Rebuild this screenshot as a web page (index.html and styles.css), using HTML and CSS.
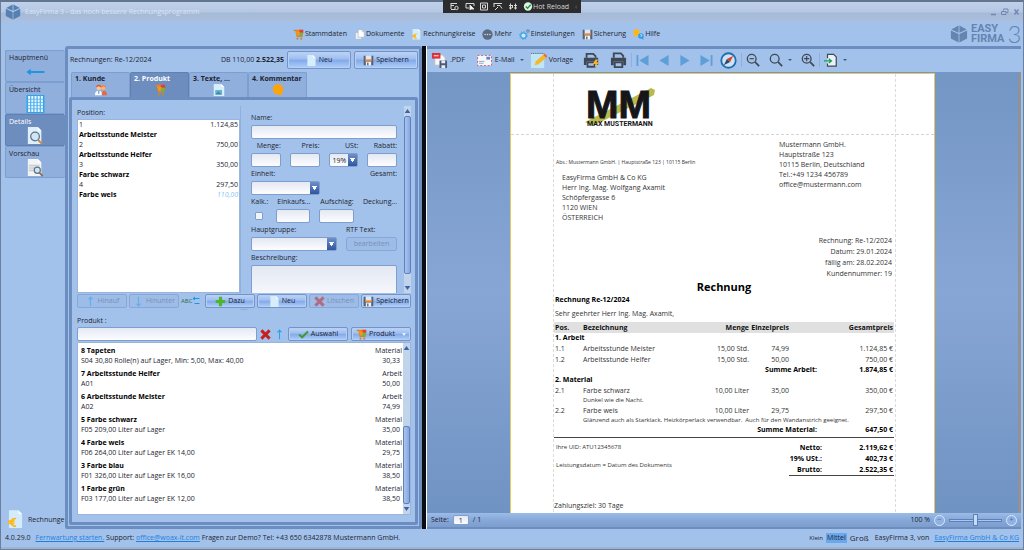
FILE: index.html
```html
<!DOCTYPE html>
<html lang="de">
<head>
  <meta charset="UTF-8">
  <meta name="viewport" content="width=device-width, initial-scale=1.0">
  <title>EasyFirma 3 - das noch bessere Rechnungsprogramm</title>
  <link rel="stylesheet" href="styles.css">
</head>
<body>
  <!-- Symbole -->
  <svg class="symbols" width="0" height="0" aria-hidden="true">
    <symbol id="i-cube" viewBox="0 0 20 20">
      <path d="M9.5 0.5v8L1.5 5zM10.5 0.5v8l8-3.5zM1 6l8.5 4v9.5L1 15zM19 6l-8.5 4v9.5L19 15z"/>
    </symbol>
    <symbol id="i-cart" viewBox="0 0 16 16">
      <path d="M1 2h3l2 9h8" fill="none" stroke="#c98a2b" stroke-width="1.5"/>
      <path d="M4 1h5v9H6z" fill="#f58220"/><path d="M9 1h6v5H9z" fill="#e8402a"/><path d="M9 5h6l-1 5H9z" fill="#7fae3a"/>
      <path d="M4 4l6 0-1 5-3 0z" fill="#f7941e"/>
      <circle cx="6.500" cy="14" r="1.500" fill="#c48a3a"/><circle cx="12" cy="14" r="1.500" fill="#c48a3a"/>
    </symbol>
    <symbol id="i-docs" viewBox="0 0 16 16">
      <path d="M2 5h7l2 2v8H2z" fill="#eef3f8" stroke="#a9b4c2"/>
      <path d="M6 1h6l3 3v8H6z" fill="#fff" stroke="#a9b4c2"/><path d="M12 1v3h3" fill="none" stroke="#a9b4c2"/>
    </symbol>
    <symbol id="i-euro" viewBox="0 0 16 20">
      <path d="M1 0h10l4 4v15H1z" fill="#d4ebfb"/><path d="M11 0v4h4z" fill="#f4fbff"/>
      <path d="M8.500 9.200a4 4 0 1 0 0 7.600M0 11.800h7M0 14.200h7" fill="none" stroke="#fdb813" stroke-width="1.900"/>
    </symbol>
    <symbol id="i-more" viewBox="0 0 16 16">
      <circle cx="8" cy="8" r="7.500" fill="#5b6b80"/><g fill="#c9d8ec"><circle cx="4.500" cy="8" r="1.200"/><circle cx="8" cy="8" r="1.200"/><circle cx="11.500" cy="8" r="1.200"/></g>
    </symbol>
    <symbol id="i-gears" viewBox="0 0 16 16">
      <circle cx="6.500" cy="9.500" r="4" fill="#cfe6fa" stroke="#3ba0e6" stroke-width="1.800"/>
      <circle cx="6.500" cy="9.500" r="5.700" fill="none" stroke="#3ba0e6" stroke-width="1.400" stroke-dasharray="2 2.400"/>
      <circle cx="13" cy="3" r="1.800" fill="none" stroke="#6b87ad" stroke-width="1.600"/>
    </symbol>
    <symbol id="i-save" viewBox="0 0 16 16">
      <path d="M1 1h3v6h8V1h3v14h-3V9H4v6H1z" fill="#5a6470"/>
      <path d="M4 1h8v6H4z" fill="#dce8f5"/><path d="M3 6.500h10v2.500H3z" fill="#f58220"/><path d="M4.500 10h7v5h-7z" fill="#f2f5f9"/><path d="M6 11h2v4H6z" fill="#5a6470"/>
    </symbol>
    <symbol id="i-help" viewBox="0 0 16 16">
      <circle cx="5" cy="5" r="4.500" fill="#fdb813"/><path d="M2 8l-1 4 4-3z" fill="#fdb813"/>
      <circle cx="11.500" cy="10" r="4" fill="#2e9be6"/><path d="M12 13l3 3v-4z" fill="#2e9be6"/>
      <path d="M10.500 9a1.200 1.200 0 1 1 1.200 1.500v1" fill="none" stroke="#fff"/>
    </symbol>
    <symbol id="i-page" viewBox="0 0 12 16">
      <path d="M0 0h8l4 4v12H0z" fill="#d6eefc"/><path d="M8 0v4h4z" fill="#f6fcff"/>
    </symbol>
    <symbol id="i-left" viewBox="0 0 20 8">
      <path d="M5 0.500v7L0.500 4z" fill="#1c94e0"/><path d="M19.500 4H3" fill="none" stroke="#1c94e0" stroke-width="2"/>
    </symbol>
    <symbol id="i-up" viewBox="0 0 8 16">
      <path d="M4 15V2M1 5l3-3.500L7 5" fill="none" stroke="#2aa3ee" stroke-width="1.600"/>
    </symbol>
    <symbol id="i-grid" viewBox="0 0 17 17">
      <path d="M0 0h17v17H0z" fill="#2fa4ea"/>
      <path d="M2.500 1v15M5.500 1v15M8.500 1v15M11.500 1v15M14.500 1v15" stroke="#eaf7ff" stroke-width="2" fill="none"/>
      <path d="M1 4h15M1 7h15M1 10h15M1 13h15" stroke="#55b6ee" stroke-width="0.800" fill="none"/>
    </symbol>
    <symbol id="i-lens" viewBox="0 0 17 20">
      <circle cx="8" cy="10.500" r="4.800" fill="#cfe6f7" stroke="#5f7385" stroke-width="1.400"/><path d="M11.500 14.500l4.500 4.500" stroke="#c98a4b" stroke-width="2.200"/>
    </symbol>
    <symbol id="i-details" viewBox="0 0 17 20">
      <path d="M0 0h11l4 4v15H0z" fill="#dff0fb"/><path d="M11 0v4h4z" fill="#fff"/><use href="#i-lens" width="17" height="20"/>
    </symbol>
    <symbol id="i-preview" viewBox="0 0 17 20">
      <path d="M0 0h11l4 4v15H0z" fill="#f1f3f5"/><path d="M11 0v4h4z" fill="#fff"/>
      <path d="M1 7h12M1 9h12M1 11h12M1 13h12" stroke="#b4bbc3" stroke-width="0.900"/>
      <circle cx="10.500" cy="12.500" r="3.400" fill="#cfe6f7" stroke="#5f7385" stroke-width="1.300"/><path d="M13 15.500l3.500 3.500" stroke="#8d6b58" stroke-width="2"/>
    </symbol>
    <symbol id="i-people" viewBox="0 0 16 16">
      <circle cx="5" cy="5" r="3.200" fill="#f6c79a"/><path d="M1.500 4.500a3.500 3.500 0 0 1 7 0L5 3z" fill="#e2552b"/><path d="M0 15c0-5 2-6 5-6s4 1 4.500 6z" fill="#f6f8fb"/><path d="M4.500 9h1.200v4H4.500z" fill="#3276c8"/>
      <circle cx="11" cy="5" r="3.200" fill="#f6b37a"/><path d="M7.500 5a3.500 3.500 0 1 1 7 0l-3-2z" fill="#ef7d1a"/><path d="M9 15c0-4 1-6 3-6s4 2 4 6z" fill="#e66a3c"/>
    </symbol>
    <symbol id="i-text" viewBox="0 0 14 16">
      <path d="M0 0h10l4 4v12H0z" fill="#d6eefc"/><path d="M2 8h9v6H2z" fill="#5fb6c8"/><path d="M2 14l4-4 5 4z" fill="#4a7fae"/><path d="M10 0v4h4z" fill="#fff"/>
    </symbol>
    <symbol id="i-comment" viewBox="0 0 16 16">
      <circle cx="8" cy="7" r="7" fill="#fda40b"/><path d="M6 12h8l-3 4-3-3z" fill="#fda40b"/>
    </symbol>
    <symbol id="i-x" viewBox="0 0 16 16">
      <path d="M2 2l12 12M14 2L2 14" stroke="#c81e1e" stroke-width="4.200"/>
    </symbol>
    <symbol id="i-plus" viewBox="0 0 16 16"><path d="M8 1v14M1 8h14" stroke="#4fb52a" stroke-width="4.600"/></symbol>
    <symbol id="i-check" viewBox="0 0 16 12"><path d="M1.500 6L6 10 14.500 1.500" fill="none" stroke="#3f9c35" stroke-width="3"/></symbol>
    <symbol id="i-first" viewBox="0 0 14 14"><path d="M0 1h2v12H0zM13 1v12L3 7z"/></symbol>
    <symbol id="i-prev" viewBox="0 0 14 14"><path d="M12 1v12L2 7z"/></symbol>
    <symbol id="i-printer" viewBox="0 0 18 18">
      <path d="M4 6V1.500h7.500L14 4v2" fill="none" stroke="#3f4854" stroke-width="2"/>
      <path d="M1 6h16v8h-3v-4H4v4H1z" fill="#3f4854"/><path d="M5 11h8v5H5z" fill="none" stroke="#3f4854" stroke-width="2"/>
    </symbol>
    <symbol id="i-zoom" viewBox="0 0 16 16">
      <circle cx="6.500" cy="6.500" r="5" fill="none" stroke="#3f4854" stroke-width="1.500"/><path d="M10.500 10.500l4.500 4.500" stroke="#3f4854" stroke-width="2"/>
    </symbol>
  </svg>

  <div class="window">
    <header class="titlebar">
      <svg class="icon cube"><use href="#i-cube"/></svg>
      <span class="caption">EasyFirma 3 - das noch bessere Rechnungsprogramm</span>
      <svg class="win-buttons" viewBox="0 0 30 8" fill="none" stroke="#7583b3">
        <path d="M1 6.500h5" stroke-width="1.500"/><path d="M13.500 2.500v-1.500h4.500v3.500h-1.500M11.500 3.500h4.500v3h-4.500z"/><path d="M24.500 1.500l4 5M28.500 1.500l-4 5" stroke-width="1.400"/>
      </svg>
      <div class="debugbar">
        <svg viewBox="0 0 68 9" fill="none" stroke="#d8d8d8">
          <path d="M1 1.500h6M1 3.500h3M1 7.500h4M1 1v6"/><circle cx="6.500" cy="6" r="1.700"/>
          <path d="M19 6h-3V1.500h8V4"/><path d="M20 3l4 4h-3l-1 1z" fill="#fff"/>
          <path d="M30.500 1h7v7h-7zM32.500 3h3v3h-3z"/>
          <path d="M44 1.500h8M44 1v4M47 3.500h3l2 3M45 8l3-3"/>
          <path d="M60.500 1.500v6M62.500 3v3M65.500 1.500v6M59 3.500h3M64 3.500h3M59 6h3M64 6h3"/>
        </svg>
        <svg class="ok" viewBox="0 0 10 10"><circle cx="5" cy="5" r="4.600" fill="#dff5df"/><path d="M2.500 5l2 2 3.500-4" fill="none" stroke="#239a3b" stroke-width="1.600"/></svg>
        <span>Hot Reload</span>
        <span class="collapse">‹</span>
      </div>
    </header>

    <div class="ribbon">
      <nav class="menu">
        <a href="#"><svg class="icon"><use href="#i-cart"/></svg>Stammdaten</a>
        <a href="#"><svg class="icon"><use href="#i-docs"/></svg>Dokumente</a>
        <a href="#"><svg class="icon"><use href="#i-euro"/></svg>Rechnungkreise</a>
        <a href="#"><svg class="icon"><use href="#i-more"/></svg>Mehr</a>
        <a href="#"><svg class="icon"><use href="#i-gears"/></svg>Einstellungen</a>
        <a href="#"><svg class="icon"><use href="#i-save"/></svg>Sicherung</a>
        <a href="#"><svg class="icon"><use href="#i-help"/></svg>Hilfe</a>
      </nav>
      <div class="brand">
        <svg class="cube"><use href="#i-cube"/></svg>
        <span class="brand-name">EASY<br>FIRMA</span>
        <span class="brand-no">3</span>
      </div>
    </div>

    <main class="main">
      <aside class="sidebar">
        <a class="side-tab" href="#">Hauptmenü<svg class="arrow"><use href="#i-left"/></svg></a>
        <a class="side-tab" href="#">Übersicht<svg><use href="#i-grid"/></svg></a>
        <a class="side-tab active" href="#">Details<svg><use href="#i-details"/></svg></a>
        <a class="side-tab" href="#">Vorschau<svg><use href="#i-preview"/></svg></a>
        <div class="side-foot"><svg><use href="#i-euro"/></svg><span>Rechnunge</span></div>
      </aside>

      <section class="panel">
        <div class="panel-head">
          <span>Rechnungen: Re-12/2024</span>
          <span class="sum">DB 110,00 <b>2.522,35</b></span>
          <button class="btn big" type="button"><svg class="icon"><use href="#i-page"/></svg>Neu</button>
          <button class="btn big" type="button"><svg class="icon"><use href="#i-save"/></svg>Speichern</button>
        </div>
        <div class="tabs">
          <a class="tab" href="#">1. Kunde<svg><use href="#i-people"/></svg></a>
          <a class="tab active" href="#">2. Produkt<svg><use href="#i-cart"/></svg></a>
          <a class="tab" href="#">3. Texte, ...<svg><use href="#i-text"/></svg></a>
          <a class="tab" href="#">4. Kommentar<svg><use href="#i-comment"/></svg></a>
        </div>

        <div class="tab-body">
          <div class="editor">
            <div class="positions">
              <div class="label">Position:</div>
              <ul class="pos-list">
                <li><span>1</span><span>1.124,85</span></li>
                <li><b>Arbeitsstunde Meister</b></li>
                <li><span>2</span><span>750,00</span></li>
                <li><b>Arbeitsstunde Helfer</b></li>
                <li><span>3</span><span>350,00</span></li>
                <li><b>Farbe schwarz</b></li>
                <li><span>4</span><span>297,50</span></li>
                <li><b>Farbe weis</b><i>110,00</i></li>
              </ul>
            </div>

            <form class="fields">
              <div class="row">
                <label class="field">Name:<input type="text"></label>
              </div>
              <div class="row four">
                <label class="field num">Menge:<input type="text"></label>
                <label class="field num">Preis:<input type="text"></label>
                <label class="field num">USt:<select><option>19%</option></select></label>
                <label class="field num">Rabatt:<input type="text"></label>
              </div>
              <div class="row four">
                <label class="field wide">Einheit:<select><option></option></select></label>
                <span class="field num last">Gesamt:</span>
              </div>
              <div class="row calc">
                <label class="field">Kalk.:<input type="checkbox"></label>
                <label class="field num">Einkaufs...<input type="text"></label>
                <label class="field num">Aufschlag:<input type="text"></label>
                <span class="field num">Deckung...</span>
              </div>
              <div class="row group">
                <label class="field">Hauptgruppe:<select><option></option></select></label>
                <div class="field">RTF Text:<button class="btn" type="button" disabled>bearbeiten</button></div>
              </div>
              <div class="row">
                <label class="field">Beschreibung:<textarea></textarea></label>
              </div>
            </form>

            <div class="scrollbar"><span class="up"></span><span class="thumb form-thumb"></span><span class="down"></span></div>
          </div>

          <div class="buttons">
            <button class="btn" type="button" disabled><svg class="icon"><use href="#i-up"/></svg>Hinauf</button>
            <button class="btn" type="button" disabled><svg class="icon flip"><use href="#i-up"/></svg>Hinunter</button>
            <span class="tools">
              <span class="abc">ABC</span>
              <svg viewBox="0 0 8 10" fill="none" stroke="#1c94e0"><path d="M7.500 2.500h-6M3 1L1 2.500 3 4M2.500 7.500h5" /></svg>
            </span>
            <button class="btn" type="button"><svg class="icon"><use href="#i-plus"/></svg>Dazu</button>
            <button class="btn" type="button"><svg class="icon"><use href="#i-page"/></svg>Neu</button>
            <button class="btn" type="button" disabled><svg class="icon"><use href="#i-x"/></svg>Löschen</button>
            <button class="btn" type="button"><svg class="icon"><use href="#i-save"/></svg>Speichern</button>
          </div>
          <div class="grip">····</div>

          <label class="label" for="produkt">Produkt :</label>
          <div class="search">
            <input type="text" id="produkt">
            <svg class="icon"><use href="#i-x"/></svg>
            <svg class="icon"><use href="#i-up"/></svg>
            <button class="btn" type="button"><svg class="icon"><use href="#i-check"/></svg>Auswahl</button>
            <button class="btn drop" type="button"><svg class="icon"><use href="#i-cart"/></svg>Produkt</button>
          </div>
          <div class="products">
            <ul>
              <li><b>8 Tapeten</b><span>Material</span><span>S04 30,80 Rolle(n) auf Lager, Min: 5,00, Max: 40,00</span><span class="price">30,33</span></li>
              <li><b>7 Arbeitsstunde Helfer</b><span>Arbeit</span><span>A01</span><span class="price">50,00</span></li>
              <li><b>6 Arbeitsstunde Meister</b><span>Arbeit</span><span>A02</span><span class="price">74,99</span></li>
              <li><b>5 Farbe schwarz</b><span>Material</span><span>F05 209,00 Liter auf Lager</span><span class="price">35,00</span></li>
              <li><b>4 Farbe weis</b><span>Material</span><span>F06 264,00 Liter auf Lager EK 14,00</span><span class="price">29,75</span></li>
              <li><b>3 Farbe blau</b><span>Material</span><span>F01 326,00 Liter auf Lager EK 16,00</span><span class="price">38,50</span></li>
              <li><b>1 Farbe grün</b><span>Material</span><span>F03 177,00 Liter auf Lager EK 12,00</span><span class="price">38,50</span></li>
            </ul>
            <div class="scrollbar end"><span class="up"></span><span class="thumb"></span><span class="down"></span></div>
          </div>
        </div>
      </section>

      <div class="splitter"></div>

      <section class="viewer">
        <div class="toolbar">
          <button type="button"><svg viewBox="0 0 18 18">
            <path d="M4 3h8l3 3v8H4z" fill="#f7f7f7" stroke="#b9bcc4"/><path d="M1 1h9v6H1z" fill="#d8323c"/><path d="M3 4h5" stroke="#fff"/>
            <path d="M9 9h8v8H9z" fill="#4a5a78"/><path d="M11 9h4v3h-4zM11 14h4v3h-4z" fill="#e8edf5"/></svg>.PDF</button>
          <button type="button" class="mail"><svg viewBox="0 0 18 14">
            <path d="M1.500 1.500h15v11h-15z" fill="#f4f7fb" stroke="#c6586a" stroke-dasharray="2 2"/><path d="M11 3h4v3h-4z" fill="#5f84c4"/><path d="M3 8h6M3 10h5" stroke="#9aa6b8"/></svg>E-Mail<i class="caret"></i></button>
          <button type="button" class="template"><svg viewBox="0 0 18 18">
            <path d="M1 2h14v15H1z" fill="#bfe6f5"/><path d="M1 1.500h14" stroke="#4a5a6b" stroke-dasharray="1 1"/><path d="M5 14l1-4 8-7 3 3-8 7z" fill="#fbb52a"/><path d="M14 3l1.500-1.500 3 3L17 6z" fill="#e86a3a"/></svg>Vorlage</button>
          <button type="button" class="printer" aria-label="Schnelldruck"><svg viewBox="0 0 19 18"><use href="#i-printer" width="18" height="18"/><path d="M14 8l-3 5h3l-1 4 5-6h-3l2-3z" fill="#fbb52a"/></svg></button>
          <button type="button" class="printer" aria-label="Drucken"><svg><use href="#i-printer"/></svg></button>
          <i class="sep"></i>
          <button type="button" class="nav-btn" aria-label="Erste Seite"><svg><use href="#i-first"/></svg></button>
          <button type="button" class="nav-btn" aria-label="Vorige Seite"><svg><use href="#i-prev"/></svg></button>
          <button type="button" class="nav-btn flip-x" aria-label="Nächste Seite"><svg><use href="#i-prev"/></svg></button>
          <button type="button" class="nav-btn flip-x" aria-label="Letzte Seite"><svg><use href="#i-first"/></svg></button>
          <button type="button" class="compass" aria-label="Navigation"><svg viewBox="0 0 16 16"><circle cx="8" cy="8" r="6.800" fill="#cfe3f8" stroke="#1f6fae" stroke-width="1.700"/><path d="M12.500 3.500L9.500 9.500 6.500 6.500z" fill="#e0401f"/><path d="M3.500 12.500l3-6 3 3z" fill="#2a4a6b"/></svg></button>
          <i class="sep"></i>
          <button type="button" class="zoom-btn" aria-label="Verkleinern"><svg viewBox="0 0 16 16"><use href="#i-zoom" width="16" height="16"/><path d="M4 6.500h5" stroke="#3f4854" stroke-width="1.300"/></svg></button>
          <button type="button" class="zoom-btn" aria-label="Zoom"><svg><use href="#i-zoom"/></svg><i class="caret"></i></button>
          <button type="button" class="zoom-btn" aria-label="Vergrößern"><svg viewBox="0 0 16 16"><use href="#i-zoom" width="16" height="16"/><path d="M3.500 6.500h6M6.500 3.500v6" stroke="#3f4854" stroke-width="1.300"/></svg></button>
          <i class="sep"></i>
          <button type="button" class="zoom-btn" aria-label="Exportieren"><svg viewBox="0 0 16 16"><path d="M4 6V1.500h7l3 3V15H4v-3" fill="#eaf2fb" stroke="#3f4854" stroke-width="1.400"/><path d="M0 9h8M5.500 6.500L8.500 9l-3 2.500" fill="none" stroke="#1f9a4d" stroke-width="1.500"/></svg><i class="caret"></i></button>
        </div>

        <div class="canvas">
          <article class="paper">
            <header class="letterhead">
              <svg class="logo" viewBox="0 0 72 44" role="img" aria-label="MM Max Mustermann">
                <path d="M0 38L66 4l4 2-1 5L8 42z" fill="#b9b94f"/>
                <text x="1" y="34" class="logo-mm">MM</text>
                <text x="2" y="42" class="logo-name">MAX MUSTERMANN</text>
              </svg>
            </header>
            <div class="letter">
              <div class="addresses">
                <div class="recipient">
                  <p class="sender">Abs.: Mustermann GmbH. | Hauptstraße 123 | 10115 Berlin</p>
                  <address>EasyFirma GmbH &amp; Co KG<br>Herr Ing. Mag. Wolfgang Axamit<br>Schöpfergasse 6<br>1120 WIEN<br>ÖSTERREICH</address>
                </div>
                <address class="company">Mustermann GmbH.<br>Hauptstraße 123<br>10115 Berlin, Deutschland<br>Tel.:+49 1234 456789<br>office@mustermann.com</address>
              </div>
              <p class="meta">Rechnung: Re-12/2024<br>Datum: 29.01.2024<br>fällig am: 28.02.2024<br>Kundennummer: 19</p>
              <h1>Rechnung</h1>
              <h2>Rechnung Re-12/2024</h2>
              <p class="salutation">Sehr geehrter Herr Ing. Mag. Axamit,</p>

              <table class="items">
                <colgroup><col class="c-pos"><col><col class="c-qty"><col class="c-unit"><col class="c-gap"><col class="c-total"></colgroup>
                <thead>
                  <tr><th>Pos.</th><th>Bezeichnung</th><th class="r">Menge</th><th class="r">Einzelpreis</th><th></th><th class="r">Gesamtpreis</th></tr>
                </thead>
                <tbody>
                  <tr class="bold"><td colspan="6">1. Arbeit</td></tr>
                  <tr><td>1.1</td><td>Arbeitsstunde Meister</td><td class="r">15,00 Std.</td><td class="r">74,99</td><td></td><td class="r">1.124,85 €</td></tr>
                  <tr><td>1.2</td><td>Arbeitsstunde Helfer</td><td class="r">15,00 Std.</td><td class="r">50,00</td><td></td><td class="r">750,00 €</td></tr>
                  <tr class="bold"><td colspan="5" class="r">Summe Arbeit:</td><td class="r">1.874,85 €</td></tr>
                  <tr class="bold"><td colspan="6">2. Material</td></tr>
                  <tr><td>2.1</td><td>Farbe schwarz</td><td class="r">10,00 Liter</td><td class="r">35,00</td><td></td><td class="r">350,00 €</td></tr>
                  <tr class="note"><td></td><td colspan="5">Dunkel wie die Nacht.</td></tr>
                  <tr><td>2.2</td><td>Farbe weis</td><td class="r">10,00 Liter</td><td class="r">29,75</td><td></td><td class="r">297,50 €</td></tr>
                  <tr class="note"><td></td><td colspan="5">Glänzend auch als Starklack, Heizkörperlack verwendbar.&nbsp; Auch für den Wandanstrich geeignet.</td></tr>
                  <tr class="bold"><td colspan="5" class="r">Summe Material:</td><td class="r">647,50 €</td></tr>
                </tbody>
              </table>

              <div class="summary">
                <div class="hints"><p>Ihre UID: ATU12345678</p><p>Leistungsdatum = Datum des Dokuments</p></div>
                <table class="totals">
                  <tr><th>Netto:</th><td>2.119,62 €</td></tr>
                  <tr><th>19% USt.:</th><td>402,73 €</td></tr>
                  <tr><th>Brutto:</th><td>2.522,35 €</td></tr>
                </table>
              </div>
              <p class="terms">Zahlungsziel: 30 Tage</p>
            </div>
          </article>
        </div>

        <div class="pager">
          <label for="seite">Seite:</label>
          <input type="text" id="seite" value="1">
          <span>/ 1</span>
          <span class="percent">100 %</span>
          <button class="round" type="button" aria-label="Kleiner">−</button>
          <input type="range" aria-label="Zoomstufe" min="0" max="100" value="50">
          <button class="round" type="button" aria-label="Größer">+</button>
        </div>
      </section>
    </main>

    <footer class="statusbar">
      <span class="version">4.0.29.0</span>
      <span><a href="#">Fernwartung starten.</a> Support: <a href="#">office@woax-it.com</a> Fragen zur Demo? Tel: +43 650 6342878 Mustermann GmbH.</span>
      <span class="sizes"><button type="button" class="small">Klein</button><button type="button" class="on">Mittel</button><button type="button" class="large">Groß</button></span>
      <span>EasyFirma 3, von</span>
      <a href="#">EasyFirma GmbH &amp; Co KG</a>
    </footer>
  </div>
</body>
</html>
```
FILE: styles.css
```css
* {
  box-sizing: border-box;
}
body {
  margin: 0;
  font-family: "Open Sans", "Noto Sans", sans-serif;
  font-size: 7px;
  line-height: 10px;
  color: #1c2430;
  background-color: #a3c2eb;
}
button, input, select, textarea {
  font: inherit;
  color: inherit;
  margin: 0;
}
ul {
  list-style: none;
  margin: 0;
  padding: 0;
}
p, h1, h2, address {
  margin: 0;
  font-style: normal;
}
a {
  color: #1f7fdc;
}
.symbols {
  position: absolute;
}
.icon {
  width: 11px;
  height: 11px;
  flex: none;
}
.flip {
  transform: scaleY(-1);
}

/* Fenster */
.window {
  display: flex;
  flex-direction: column;
  height: 100vh;
  border: 1px solid #6b7f9c;
  border-top: 2px solid #62758f;
}
.titlebar {
  position: relative;
  display: flex;
  align-items: center;
  flex: none;
  height: 20px;
  padding: 0 3px 0 4px;
  background: linear-gradient(#c0d0ea, #b4c7e3 50%, #a6bad6 55%, #aac0de);
}
.titlebar .cube {
  width: 16px;
  height: 16px;
  fill: #5480b3;
}
.caption {
  flex: 1;
  margin-left: 4px;
  color: #d9e4f5;
}
.win-buttons {
  width: 30px;
  height: 8px;
}
.debugbar {
  position: absolute;
  top: -2px;
  left: 442px;
  display: flex;
  align-items: center;
  width: 138px;
  height: 13px;
  padding: 0 4px 0 7px;
  background-color: #2c2c2e;
  color: #d8d8d8;
}
.debugbar svg {
  width: 68px;
  height: 9px;
}
.debugbar .ok {
  width: 10px;
  height: 9px;
  margin-left: 5px;
}
.debugbar .collapse {
  margin-left: auto;
  color: #777;
}

/* Menü */
.ribbon {
  display: flex;
  align-items: center;
  flex: none;
  height: 24px;
  margin: 0 2px;
  background-color: #a3c2eb;
}
.menu {
  display: flex;
  flex: 1;
  justify-content: center;
  gap: 7px;
}
.menu a {
  display: flex;
  align-items: center;
  gap: 1px;
  color: inherit;
  text-decoration: none;
}
.brand {
  display: flex;
  align-items: center;
  gap: 3px;
  width: 71px;
  color: #6485b0;
}
.brand .cube {
  width: 18px;
  height: 20px;
  flex: none;
  fill: #6485b0;
}
.brand-name {
  font-family: Roboto, "Liberation Sans", sans-serif;
  font-weight: bold;
  font-size: 11px;
  line-height: 10px;
}
.brand-no {
  font-family: Lato, sans-serif;
  font-weight: 300;
  font-size: 24px;
  line-height: 20px;
}

/* Hauptbereich */
.main {
  display: grid;
  grid-template-columns: 60px 357px 5px 1fr;
  flex: 1;
  min-height: 0;
  margin: 0 2px;
  padding-left: 2px;
}
.sidebar {
  display: flex;
  flex-direction: column;
  padding-top: 4px;
}
.side-tab {
  display: flex;
  flex-direction: column;
  height: 32px;
  padding: 2px 3px 0;
  border: 1px solid #7d9fd0;
  border-right: 0;
  border-radius: 2px;
  background-color: #90afdc;
  color: inherit;
  text-decoration: none;
}
.side-tab svg {
  width: 19px;
  height: 19px;
  margin: 0 auto;
}
.side-tab .arrow {
  height: 8px;
  margin-top: 5px;
}
.side-tab.active {
  background-color: #6c8dbd;
  border-color: #6080b2;
  color: #fff;
}
.side-foot {
  display: flex;
  align-items: center;
  gap: 5px;
  margin-top: auto;
  padding-left: 3px;
  overflow: hidden;
}
.side-foot svg {
  width: 15px;
  height: 19px;
  flex: none;
}

.panel {
  display: flex;
  flex-direction: column;
  min-height: 0;
  padding: 0 1px 1px;
  border: 3px solid #6c8dbf;
  border-radius: 3px 3px 2px 2px;
  background-color: #a3c2eb;
}
.panel-head {
  display: flex;
  align-items: center;
  gap: 3px;
  flex: none;
  height: 23px;
  padding: 0 0 1px 1px;
}
.panel-head .sum {
  margin-left: auto;
}
.btn {
  display: inline-flex;
  align-items: center;
  justify-content: center;
  gap: 2px;
  height: 14px;
  padding: 0;
  border: 1px solid #7493c8;
  border-radius: 2px;
  background: linear-gradient(#bed4f6, #9dbdf0 45%, #82a8e8 50%, #add0fb);
  box-shadow: inset 0 0 0 1px #b7cff3;
  white-space: nowrap;
}
.btn:disabled {
  background: #9dbce8;
  border-color: #88a7d8;
  box-shadow: none;
  color: #7890b5;
}
.btn:disabled .icon {
  opacity: 0.5;
}
.btn.big {
  width: 64px;
  height: 18px;
}
.tabs {
  display: flex;
  flex: none;
  padding-left: 2px;
}
.tab {
  display: flex;
  flex-direction: column;
  width: 59px;
  height: 25px;
  padding: 1px 3px 0;
  border: 1px solid #7d9fd0;
  border-bottom: 0;
  border-radius: 2px 2px 0 0;
  background-color: #90afdc;
  color: inherit;
  font-weight: bold;
  text-decoration: none;
  white-space: nowrap;
}
.tab svg {
  width: 12px;
  height: 12px;
  margin: 0 auto;
}
.tab.active {
  background-color: #6c8dbd;
  border-color: #6080b2;
  color: #fff;
}
.tab-body {
  display: flex;
  flex-direction: column;
  flex: 1;
  min-height: 0;
  padding: 6px 4px 7px 5px;
  border: 3px solid #6c8dbf;
  border-radius: 2px;
}

/* Positionen und Felder */
.editor {
  display: flex;
  flex: none;
  height: 187px;
}
.positions {
  display: flex;
  flex-direction: column;
  width: 164px;
  border-right: 1px solid #8fb0df;
}
.label {
  line-height: 13px;
}
.pos-list {
  flex: 1;
  background-color: #fff;
  border: 1px solid #9ab4da;
}
.pos-list li {
  display: flex;
  justify-content: space-between;
  padding: 0 1px;
}
.pos-list i {
  color: #8cc8f0;
}
.pos-list b, .products b {
  color: #000;
}
.fields {
  flex: 1;
  margin: 5px 7px 0 10px;
  overflow: hidden;
}
.row {
  display: grid;
  column-gap: 9px;
}
.four {
  grid-template-columns: repeat(4, 1fr);
}
.calc {
  grid-template-columns: 16px repeat(3, 1fr);
}
.group {
  grid-template-columns: 1fr 51px;
}
.field {
  display: flex;
  flex-direction: column;
  min-width: 0;
  height: 28px;
  line-height: 14px;
  white-space: nowrap;
}
.field.num {
  text-align: right;
}
.field.wide {
  grid-column: span 2;
}
.field.last {
  grid-column: 4;
}
input[type="text"], select, textarea {
  width: 100%;
  height: 14px;
  padding: 0 3px;
  border: 1px solid #7f9dcd;
  border-radius: 2px;
  background: linear-gradient(#e3e8f2, #fdfdff);
}
select {
  appearance: none;
  background:
    conic-gradient(from -35deg at 50% 100%, #fff 70deg, transparent 0) right 2px center / 5px 4px no-repeat,
    linear-gradient(#6e8fcb, #2f569f) right / 9px 100% no-repeat,
    linear-gradient(#e3e8f2, #fdfdff);
}
textarea {
  display: block;
  flex: none;
  height: 40px;
  resize: none;
}
input[type="checkbox"] {
  appearance: none;
  width: 8px;
  height: 8px;
  margin: 3px 4px;
  border: 1px solid #7f9dcd;
  border-radius: 1px;
  background-color: #f0f4fb;
}
.scrollbar {
  display: flex;
  flex-direction: column;
  width: 7px;
  flex: none;
  background-color: #c2d4ea;
}
.thumb {
  flex: 1;
  border: 1px solid #5e80bc;
  border-radius: 2px;
  background: linear-gradient(90deg, #a9c4ef, #86a7df);
}
.form-thumb {
  flex: none;
  height: 158px;
}
.scrollbar .up, .scrollbar .down {
  height: 10px;
  background-color: #3d62a8;
  clip-path: polygon(50% 30%, 90% 70%, 10% 70%);
}
.scrollbar .down {
  margin-top: auto;
  clip-path: polygon(50% 70%, 90% 30%, 10% 30%);
}
.scrollbar.end .up {
  margin-bottom: auto;
}
.scrollbar.end .thumb {
  flex: none;
  height: 78px;
}
.scrollbar.end .down {
  margin-top: 0;
}
.buttons {
  display: flex;
  gap: 2px;
  flex: none;
  margin-top: 1px;
}
.buttons .btn {
  flex: 1;
}
.tools {
  display: flex;
  align-items: center;
  width: 22px;
}
.tools svg {
  width: 8px;
  height: 10px;
}
.abc {
  font-size: 6px;
  color: #2c6b4a;
}
.grip {
  height: 6px;
  line-height: 4px;
  text-align: center;
  color: #5f7fae;
}
.search {
  display: flex;
  align-items: center;
  gap: 3px;
  flex: none;
}
.search input {
  flex: 1;
}
.search .btn {
  width: 60px;
}
.drop::after {
  content: "";
  margin-left: 5px;
  border: 2px solid transparent;
  border-top: 3px solid #e6f0ff;
  border-bottom: 0;
}
.products {
  display: flex;
  flex: 1;
  min-height: 0;
  margin-top: 1px;
  border: 1px solid #9ab4da;
  background-color: #fff;
}
.products ul {
  flex: 1;
  padding: 3px 1px 0 3px;
}
.products li {
  display: grid;
  grid-template-columns: 1fr auto;
  grid-auto-rows: 10px;
  height: 23px;
}
.products li span:nth-child(even) {
  text-align: right;
}
.products .price {
  padding-right: 2px;
}

.splitter {
  border-right: 1px solid #fff;
  background-color: #0b0c10;
}

/* Vorschau */
.viewer {
  display: flex;
  flex-direction: column;
  min-width: 0;
  min-height: 0;
  border-top: 3px solid #6c8dbf;
  border-bottom: 2px solid #6c8dbf;
}
.toolbar {
  display: flex;
  align-items: center;
  flex: none;
  height: 23px;
  padding: 0 0 1px 4px;
}
.toolbar button {
  display: flex;
  align-items: center;
  gap: 2px;
  padding: 0;
  border: 0;
  background: none;
}
.toolbar svg {
  width: 17px;
  height: 17px;
}
.toolbar .mail {
  margin-left: 11px;
}
.toolbar .mail svg {
  height: 13px;
}
.toolbar .template {
  margin-left: 6px;
}
.toolbar .printer {
  margin-left: 10px;
}
.toolbar .sep {
  width: 1px;
  height: 14px;
  margin: 0 4px;
  background-color: #8fb0dd;
}
.toolbar .nav-btn {
  margin-right: 7px;
  fill: #5f9fd8;
}
.toolbar .flip-x svg {
  transform: scaleX(-1);
}
.toolbar .nav-btn svg {
  width: 14px;
  height: 13px;
}
.toolbar .zoom-btn + .zoom-btn {
  margin-left: 9px;
}
.toolbar .zoom-btn svg {
  width: 14px;
  height: 14px;
}
.caret {
  margin-left: 3px;
  border: 2px solid transparent;
  border-top-color: #3f5a85;
  border-bottom: 0;
}
.canvas {
  flex: 1;
  min-height: 0;
  overflow: hidden;
  border-right: 3px solid #8f9398;
  background: linear-gradient(#7396c4, #88a6d5 50%, #6f93c3);
}
.paper {
  position: relative;
  width: 425px;
  height: 600px;
  margin: 1px auto 0;
  border: 1px solid #e8c860;
  background-color: #fff;
  color: #333;
}
/* Seitenränder */
.paper::before {
  content: "";
  position: absolute;
  inset: 0 38px 0 42px;
  border: dashed #dcdcdc;
  border-width: 0 1px;
}
.letterhead {
  height: 61px;
  padding: 10px 0 0 74px;
  border-bottom: 1px dashed #d4d4d4;
}
.logo {
  width: 72px;
  height: 44px;
}
.logo-mm {
  font: bold 39px "Liberation Sans", sans-serif;
  fill: #16161a;
  stroke: #16161a;
}
.logo-name {
  font: bold 7px Roboto, sans-serif;
  fill: #16161a;
}
.letter {
  padding: 5px 40px 0 43px;
}
.addresses {
  display: flex;
  justify-content: space-between;
}
.recipient {
  padding-top: 17px;
}
.sender {
  padding-left: 2px;
  font-size: 5px;
}
.recipient address {
  padding: 6px 0 0 8px;
}
.company {
  width: 115px;
}
.meta {
  margin-top: 12px;
  padding-right: 2px;
  line-height: 11px;
  text-align: right;
}
.letter h1 {
  font-size: 11px;
  line-height: 16px;
  text-align: center;
  color: #000;
}
.letter h2 {
  font-size: 7px;
  line-height: 10px;
  padding-left: 1px;
  color: #000;
}
.salutation {
  padding: 3px 1px;
  line-height: 11px;
}
.letter table {
  border-collapse: collapse;
}
.items {
  width: 100%;
  table-layout: fixed;
}
.items th, .items td {
  height: 11px;
  padding: 0 1px;
  line-height: 10px;
  text-align: left;
  white-space: nowrap;
}
.items th {
  background-color: #e0e0e0;
  color: #111;
}
.items .r {
  text-align: right;
}
.items .bold td {
  height: 10px;
  font-weight: bold;
  color: #000;
}
.items .note td {
  height: 9px;
  font-size: 6px;
  line-height: 9px;
}
.c-pos { width: 28px; }
.c-qty { width: 60px; }
.c-unit { width: 40px; }
.c-gap { width: 28px; }
.c-total { width: 76px; }
.summary {
  display: flex;
  justify-content: space-between;
  align-items: flex-start;
  margin-top: 2px;
  padding-top: 4px;
  border-top: 1px solid #444;
}
.hints {
  padding-left: 2px;
  font-size: 6px;
}
.hints p {
  height: 18px;
}
.totals th, .totals td {
  padding: 0 1px;
  line-height: 11px;
  text-align: right;
  color: #000;
  font-weight: bold;
}
.totals td {
  width: 71px;
}
.totals tr:last-child th, .totals tr:last-child td {
  border-bottom: 1px solid #444;
}
.terms {
  margin-top: 23px;
}
.pager {
  display: flex;
  align-items: center;
  gap: 4px;
  flex: none;
  height: 14px;
  padding: 0 4px;
  background: linear-gradient(#9bbce8, #84a5d5 60%, #7d9ecd);
}
.pager input[type="text"] {
  width: 16px;
  height: 10px;
  line-height: 8px;
  text-align: center;
}
.pager .percent {
  margin-left: auto;
}
.round {
  width: 11px;
  height: 11px;
  padding: 0;
  border: 1px solid #dbe8fb;
  border-radius: 50%;
  background-color: #8fb1e3;
  color: #4a6ba3;
  line-height: 8px;
}
input[type="range"] {
  appearance: none;
  width: 53px;
  height: 3px;
  border: 1px solid #5e80b8;
  background-color: #a9c6f2;
}
input[type="range"]::-webkit-slider-thumb {
  appearance: none;
  width: 5px;
  height: 12px;
  border: 1px solid #5e80b8;
  background-color: #c6dbf8;
}

/* Statuszeile */
.statusbar {
  display: flex;
  align-items: center;
  gap: 5px;
  flex: none;
  height: 20px;
  padding: 0 4px;
  border-bottom: 2px solid #a0b4cf;
  white-space: nowrap;
}
.sizes {
  display: flex;
  align-items: center;
  gap: 2px;
  margin-left: auto;
}
.sizes button {
  padding: 0 1px;
  border: 0;
  background: none;
}
.sizes .small {
  font-size: 6px;
}
.sizes .on {
  background-color: #6aa8ee;
}
.sizes .large {
  font-size: 8px;
}
```
